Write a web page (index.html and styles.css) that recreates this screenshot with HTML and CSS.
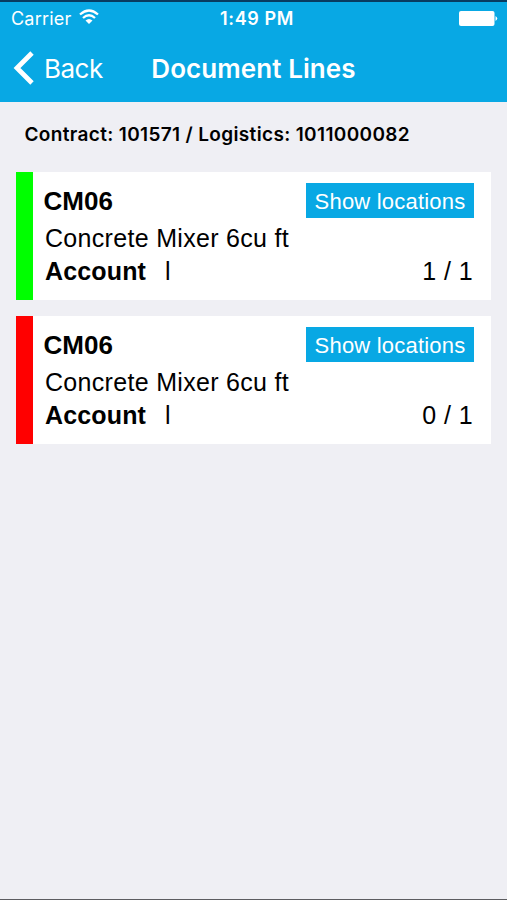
FILE: index.html
```html
<!DOCTYPE html>
<html lang="en">
<head>
<meta charset="utf-8">
<title>Document Lines</title>
<link rel="stylesheet" href="styles.css">
</head>
<body>
<header class="header">
  <div class="status">
    <div class="carrier"><span>Carrier</span>
      <svg class="wifi" width="20" height="16" viewBox="0 0 20 16"><path d="M1 5.500Q10-2.500 19 5.500M4 9Q10 3.500 16 9" fill="none" stroke="#fff" stroke-width="2.300"/><path d="M6.500 11.500Q10 8.500 13.500 11.500L10 15Z" fill="#fff"/></svg>
    </div>
    <div class="time">1:49 PM</div>
    <svg class="battery" width="39" height="15" viewBox="0 0 39 15"><rect width="35.500" height="15" rx="2" fill="#fff"/><path d="M36.500 5Q40 7.500 36.500 10Z" fill="#fff"/></svg>
  </div>
  <nav class="nav">
    <a class="back"><svg width="21" height="34" viewBox="0 0 21 34"><path d="M19 2L4 17L19 32" fill="none" stroke="#fff" stroke-width="4.800"/></svg><span>Back</span></a>
    <h1>Document Lines</h1>
  </nav>
</header>
<main>
  <p class="contract">Contract: 101571 / Logistics: 1011000082</p>
  <section class="card done">
    <div class="top"><h2>CM06</h2><button>Show locations</button></div>
    <p class="name">Concrete Mixer 6cu ft</p>
    <div class="bottom"><b>Account</b><span class="bar">l</span><span class="count">1 / 1</span></div>
  </section>
  <section class="card open">
    <div class="top"><h2>CM06</h2><button>Show locations</button></div>
    <p class="name">Concrete Mixer 6cu ft</p>
    <div class="bottom"><b>Account</b><span class="bar">l</span><span class="count">0 / 1</span></div>
  </section>
</main>
</body>
</html>
```
FILE: styles.css
```css
* { box-sizing: border-box; margin: 0; }
body { height: 900px; background: #efeff4; font-family: "Liberation Sans", sans-serif; color: #000; border-bottom: 1px solid #5c5c60; }
.header { height: 102px; background: #08a8e4; color: #fff; border-top: 2px solid #083b61; }
.status { height: 33px; padding: 0 9px 0 11px; display: grid; grid-template-columns: 1fr auto 1fr; align-items: center; font: 18px Inter, sans-serif; }
.carrier { display: flex; align-items: center; gap: 8px; letter-spacing: .2px; }
.wifi { margin-top: -3px; }
.time { margin-left: 5px; font-weight: 600; font-size: 18px; letter-spacing: .6px; }
.battery { justify-self: end; margin-top: -1px; }
.nav { height: 66px; display: grid; grid-template-columns: 1fr auto 1fr; align-items: center; padding: 0 13px; }
.back { display: flex; align-items: center; gap: 10px; font: 26px Inter, sans-serif; letter-spacing: -.5px; }
.nav h1 { font: 600 26px Inter, sans-serif; letter-spacing: .08px; }
main { padding: 0 16px; }
.contract { height: 70px; padding: 22px 9px 0 8.500px; font: 600 19px/22px Inter, sans-serif; letter-spacing: .35px; white-space: nowrap; }
.card { height: 128px; margin-bottom: 16px; padding: 11px 17px 0 12px; border-left: 17px solid #0f0; background: #fff; }
.open { border-color: #f00; }
.top { display: flex; justify-content: space-between; height: 38px; }
h2 { margin-left: -1.500px; font-size: 26px; line-height: 36px; letter-spacing: 0; }
button { width: 168px; height: 35px; padding: 2px 0 0; border: 0; background: #08a8e4; color: #fff; font: 22px "Liberation Sans", sans-serif; letter-spacing: .2px; white-space: nowrap; }
.name { font-size: 25px; line-height: 34px; letter-spacing: .31px; white-space: nowrap; }
.bottom { display: flex; font-size: 25px; line-height: 32px; }
.bottom b { letter-spacing: .15px; }
.bar { margin-left: 19px; }
.count { margin-left: auto; margin-right: 1px; letter-spacing: .4px; }
```
